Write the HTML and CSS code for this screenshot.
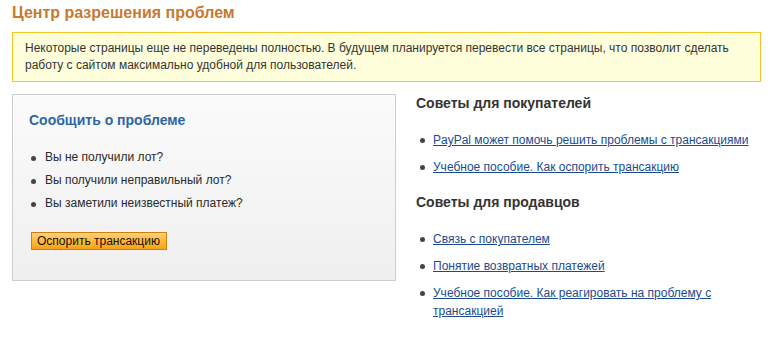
FILE: index.html
```html
<!DOCTYPE html>
<html lang="ru">
<head>
  <meta charset="UTF-8">
  <title>Центр разрешения проблем</title>
  <link rel="stylesheet" href="styles.css">
</head>
<body>

<h1 class="page-title">Центр разрешения проблем</h1>

<div class="notice">
  Некоторые страницы еще не переведены полностью. В будущем планируется перевести все страницы, что позволит сделать работу с сайтом максимально удобной для пользователей.
</div>

<div class="columns">
  <div class="report-box">
    <h2>Сообщить о проблеме</h2>
    <ul class="plain-list">
      <li>Вы не получили лот?</li>
      <li>Вы получили неправильный лот?</li>
      <li>Вы заметили неизвестный платеж?</li>
    </ul>
    <button class="dispute-btn">Оспорить трансакцию</button>
  </div>

  <div class="tips">
    <h3>Советы для покупателей</h3>
    <ul class="link-list">
      <li><a href="#">PayPal может помочь решить проблемы с трансакциями</a></li>
      <li><a href="#">Учебное пособие. Как оспорить трансакцию</a></li>
    </ul>
    <h3>Советы для продавцов</h3>
    <ul class="link-list">
      <li><a href="#">Связь с покупателем</a></li>
      <li><a href="#">Понятие возвратных платежей</a></li>
      <li><a href="#">Учебное пособие. Как реагировать на проблему с трансакцией</a></li>
    </ul>
  </div>
</div>

</body>
</html>
```

FILE: styles.css
```css
* { box-sizing: border-box; }
body {
  margin: 0;
  padding: 3px 14px 0 12px;
  font-family: "Liberation Sans", Arial, sans-serif;
  font-size: 12px;
  color: #2a2a2a;
  background: #fff;
}
.page-title {
  margin: 0;
  font-size: 16px;
  line-height: 20px;
  color: #c67a30;
}
.notice {
  margin-top: 9px;
  border: 1px solid #f6c724;
  background: #ffffdc;
  padding: 7px 12px 7px 12px;
  line-height: 17px;
  color: #333;
}
.columns {
  display: flex;
  gap: 20px;
  margin-top: 12px;
}
.report-box {
  width: 384px;
  height: 187px;
  flex-shrink: 0;
  border: 1px solid #cdcdcd;
  background: linear-gradient(#fbfbfb, #efefef);
  padding: 16px 16px 0 16px;
}
.report-box h2 {
  margin: 0;
  font-size: 14px;
  line-height: 18px;
  color: #2d66a3;
}
.plain-list, .link-list {
  list-style: none;
  margin: 0;
  padding: 0;
}
.plain-list { margin-top: 20px; }
.plain-list li, .link-list li {
  position: relative;
  line-height: 17px;
  margin-bottom: 6px;
}
.plain-list li { padding-left: 14px; margin-left: 2px; }
.plain-list li::before, .link-list li::before {
  content: "";
  position: absolute;
  left: 0;
  top: 7px;
  width: 5px;
  height: 5px;
  border-radius: 50%;
  background: #444;
}
.dispute-btn {
  margin: 14px 0 0 2px;
  font-family: "Liberation Sans", Arial, sans-serif;
  font-size: 12px;
  color: #111;
  padding: 1px 6px 1px 5px;
  height: 18px;
  line-height: 14px;
  border: 1px solid #d07f0d;
  background: linear-gradient(#ffd27a, #ffb733 55%, #f5a21c);
  cursor: pointer;
}
.tips { flex: 1; }
.tips h3 {
  margin: 0;
  font-size: 14px;
  line-height: 18px;
  color: #333;
}
.link-list { margin: 19px 0 17px 4px; }
.link-list li { line-height: 18px; margin-bottom: 9px; padding-left: 13px; }
.link-list li::before { top: 7px; }
.link-list a { color: #1a4b8e; }
```
